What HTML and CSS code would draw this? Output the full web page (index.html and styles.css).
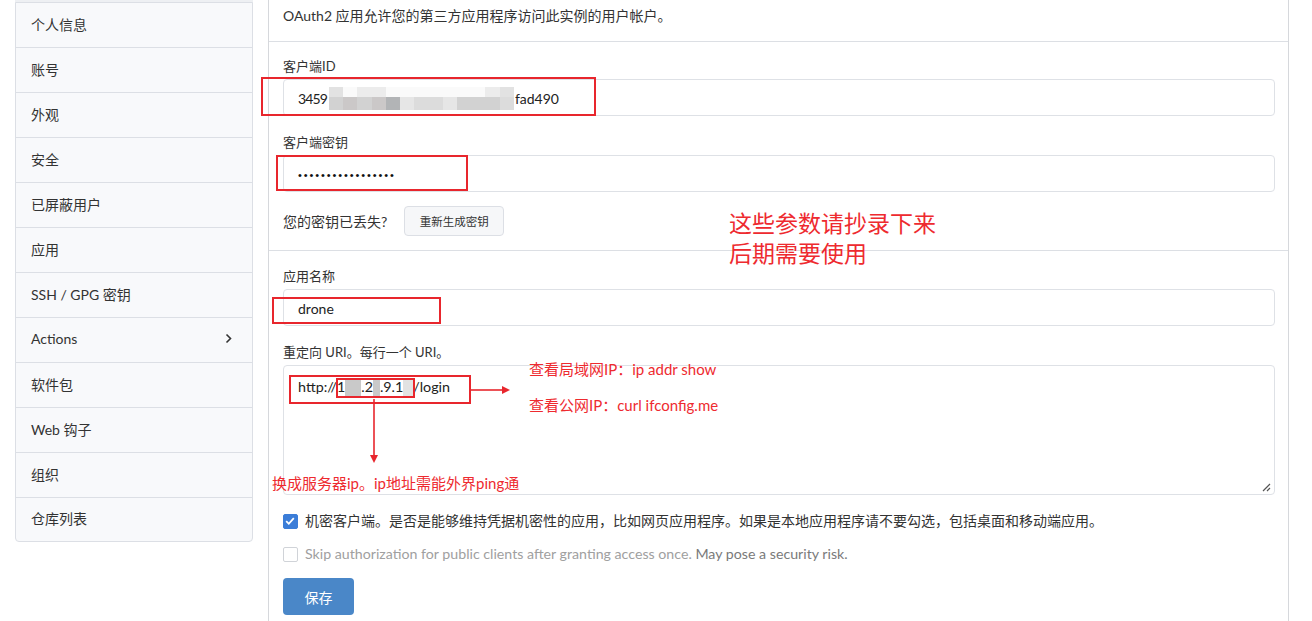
FILE: index.html
```html
<!DOCTYPE html>
<html lang="zh-CN">
<head>
<meta charset="utf-8">
<title>OAuth2 应用</title>
<link rel="stylesheet" href="styles.css">
</head>
<body>
<div class="layout">
  <nav class="sidebar">
    <div class="nav-item">个人信息</div>
    <div class="nav-item">账号</div>
    <div class="nav-item">外观</div>
    <div class="nav-item">安全</div>
    <div class="nav-item">已屏蔽用户</div>
    <div class="nav-item">应用</div>
    <div class="nav-item">SSH / GPG 密钥</div>
    <div class="nav-item">Actions<svg class="chev" width="7" height="11" viewBox="0 0 7 11"><path d="M1.5 1.5l4 4-4 4" fill="none" stroke="#333" stroke-width="1.6"/></svg></div>
    <div class="nav-item">软件包</div>
    <div class="nav-item">Web 钩子</div>
    <div class="nav-item">组织</div>
    <div class="nav-item last">仓库列表</div>
  </nav>

  <main class="panel">
    <div class="desc">OAuth2 应用允许您的第三方应用程序访问此实例的用户帐户。</div>

    <section class="sec sec-first">
      <div class="field">
        <label class="lbl">客户端ID</label>
        <div class="input"><span class="digits">3459</span><span class="mosaic"><i class="c1"></i><i class="c0"></i><i class="c2"></i><i class="c2"></i><i class="c0"></i><i class="c0"></i><i class="c0"></i><i class="c0"></i><i class="c0"></i><i class="c0"></i><i class="c0"></i><i class="c2"></i><i class="c1"></i><i class="d1"></i><i class="d3"></i><i class="d1"></i><i class="d3"></i><i class="d4"></i><i class="d0"></i><i class="d2"></i><i class="d2"></i><i class="d0"></i><i class="d1"></i><i class="d1"></i><i class="d1"></i><i class="d2"></i></span>fad490</div>
      </div>
      <div class="field gap">
        <label class="lbl">客户端密钥</label>
        <div class="input"><span class="secret">•••••••••••••••••</span></div>
      </div>
      <div class="lost-row">
        <span>您的密钥已丢失?</span>
        <button class="btn-light">重新生成密钥</button>
      </div>
    </section>

    <section class="sec sec-second">
      <div class="field">
        <label class="lbl">应用名称</label>
        <div class="input">drone</div>
      </div>
      <div class="field gap">
        <label class="lbl">重定向 URI。每行一个 URI。</label>
        <div class="textarea">http://1<span class="blk b1"></span>.2<span class="blk b2"></span>.9.1<span class="blk b3"></span>/login
          <svg class="grip" width="9" height="9" viewBox="0 0 9 9"><path d="M8 1L1 8M8 5L5 8" stroke="#555" stroke-width="1.2"/></svg>
        </div>
      </div>
      <div class="check-row">
        <span class="cb checked"><svg width="14" height="14" viewBox="0 0 14 14"><path d="M3.2 7.2l2.6 2.6 5-5.6" fill="none" stroke="#fff" stroke-width="1.8"/></svg></span>
        <span>机密客户端。是否是能够维持凭据机密性的应用，比如网页应用程序。如果是本地应用程序请不要勾选，包括桌面和移动端应用。</span>
      </div>
      <div class="check-row disabled">
        <span class="cb"></span>
        <span class="skip">Skip authorization for public clients after granting access once. <b>May pose a security risk.</b></span>
      </div>
      <button class="btn-primary">保存</button>
    </section>
  </main>
</div>

<div class="notes">
  <div class="box box-id"></div>
  <div class="box box-secret"></div>
  <div class="box box-name"></div>
  <div class="box box-url"></div>
  <div class="box box-ip"></div>
  <svg class="arrows" width="1312" height="621" viewBox="0 0 1312 621">
    <path d="M471 390H503" stroke="#e8262d" stroke-width="1.6"/>
    <path d="M502 386L510 390L502 394Z" fill="#e8262d"/>
    <path d="M374 399V456" stroke="#e8262d" stroke-width="1.6"/>
    <path d="M370 455L374 463L378 455Z" fill="#e8262d"/>
  </svg>
  <div class="note note-big">这些参数请抄录下来<br>后期需要使用</div>
  <div class="note note-lan">查看局域网IP：ip addr show</div>
  <div class="note note-pub">查看公网IP：curl ifconfig.me</div>
  <div class="note note-ip">换成服务器ip。ip地址需能外界ping通</div>
</div>
</body>
</html>
```

FILE: styles.css
```css
* { box-sizing: border-box; }
html, body { margin: 0; padding: 0; }
body {
  width: 1312px;
  height: 621px;
  overflow: hidden;
  background: #fff;
  color: #333;
  font-family: Lato, "Noto Sans CJK SC", sans-serif;
  font-size: 14px;
  position: relative;
}

.layout {
  display: flex;
  align-items: flex-start;
  padding-left: 15px;
  gap: 15px;
}

/* sidebar */
.sidebar {
  width: 238px;
  margin-top: 2px;
  background: #f8f9fb;
  border: 1px solid #dcdfe5;
  border-radius: 0 0 4px 4px;
  box-shadow: 0 -2px 0 #eef0f3;
}
.nav-item {
  height: 45px;
  display: flex;
  align-items: center;
  justify-content: space-between;
  padding: 0 20px 3px 15px;
  border-bottom: 1px solid #dcdfe5;
  color: #333;
  font-size: 14px;
}
.nav-item.last { border-bottom: none; height: 43px; }

/* panel */
.panel {
  width: 1021px;
  border-left: 1px solid #d6d8dc;
  border-right: 1px solid #d6d8dc;
  min-height: 621px;
}
.desc {
  padding: 6px 14px 15px;
  line-height: 20px;
  border-bottom: 1px solid #dcdfe4;
}
.sec { padding: 15px 13px 14px 14px; }
.sec-first { border-bottom: 1px solid #dcdfe4; }
.sec-second { padding-top: 16px; }

.field { display: flex; flex-direction: column; }
.field.gap { margin-top: 17px; }
.lbl {
  font-size: 13px;
  line-height: 18px;
  margin-bottom: 4px;
  color: #333;
}
.input {
  height: 37px;
  border: 1px solid #dee1e6;
  border-radius: 4px;
  padding: 2px 14px 0;
  display: flex;
  align-items: center;
  color: #222;
  font-size: 14px;
  background: #fff;
}
.digits { letter-spacing: -0.9px; }
.secret {
  font-family: "Liberation Sans", sans-serif;
  font-size: 11px;
  letter-spacing: 1.9px;
  color: #111;
}

.mosaic {
  display: inline-grid;
  grid-template-columns: repeat(13, 1fr);
  grid-template-rows: 10px 13px;
  width: 185px;
  height: 23px;
  margin: 0 1px 0 2px;
}
.mosaic i { display: block; }
.c0 { background: #fafafa; }
.c1 { background: #e2e2e2; }
.c2 { background: #ececec; }
.d0 { background: #e6e6e6; }
.d1 { background: #d2d2d2; }
.d2 { background: #dcdcdc; }
.d3 { background: #cbc8c8; }
.d4 { background: #b2b4b6; }

.lost-row {
  margin-top: 14px;
  height: 30px;
  display: flex;
  align-items: center;
  gap: 17px;
}
.btn-light {
  height: 30px;
  width: 100px;
  font-family: inherit;
  font-size: 11.5px;
  color: #333;
  background: #f6f7f9;
  border: 1px solid #dcdfe5;
  border-radius: 4px;
}

.textarea {
  position: relative;
  height: 130px;
  border: 1px solid #dee1e6;
  border-radius: 4px;
  padding: 10px 14px;
  line-height: 22px;
  color: #222;
  font-size: 14.3px;
}
.blk { display: inline-block; height: 18px; vertical-align: -4px; background: #c9c9c9; }
.b1 { width: 16px; }
.b2 { width: 7px; }
.b3 { width: 10px; background: #e2e2e2; }
.grip { position: absolute; right: 3px; bottom: 2px; }

.check-row {
  margin-top: 16px;
  display: flex;
  align-items: center;
  gap: 7px;
  line-height: 20px;
}
.check-row + .check-row { margin-top: 13px; }
.cb {
  width: 15px;
  height: 15px;
  border-radius: 2px;
  border: 1px solid #c8cbd0;
  background: #fff;
  display: inline-flex;
}
.cb.checked { background: #3b7dd8; border-color: #3b7dd8; }
.cb.checked svg { margin: -1px; }
.disabled { color: #a0a0a0; }
.disabled .cb { border-color: #d0d3d8; }
.skip { font-size: 14.2px; }
.disabled b { font-weight: normal; color: #7a7a7a; }

.btn-primary {
  margin-top: 14px;
  width: 71px;
  height: 37px;
  border: none;
  border-radius: 4px;
  background: #4a87c8;
  color: #fff;
  font-family: inherit;
  font-size: 14px;
}

/* annotations overlay */
.notes { position: absolute; left: 0; top: 0; width: 1312px; height: 621px; pointer-events: none; }
.box { position: absolute; border: 2px solid #e8262d; }
.box-id { left: 261px; top: 77px; width: 335px; height: 39px; }
.box-secret { left: 276px; top: 155px; width: 192px; height: 36px; }
.box-name { left: 272px; top: 297px; width: 169px; height: 27px; }
.box-url { left: 289px; top: 375px; width: 182px; height: 29px; }
.box-ip { left: 336px; top: 378px; width: 79px; height: 20px; }
.arrows { position: absolute; left: 0; top: 0; }
.note {
  position: absolute;
  color: #ee2a2f;
  font-family: Lato, "Noto Sans CJK SC", sans-serif;
  font-size: 15px;
  line-height: 20px;
  white-space: nowrap;
}
.note-big { left: 729px; top: 207px; font-size: 23px; line-height: 30px; font-family: "Noto Sans CJK SC", sans-serif; }
.note-lan { left: 529px; top: 359px; }
.note-pub { left: 529px; top: 395px; }
.note-ip { left: 272px; top: 473px; }
```
